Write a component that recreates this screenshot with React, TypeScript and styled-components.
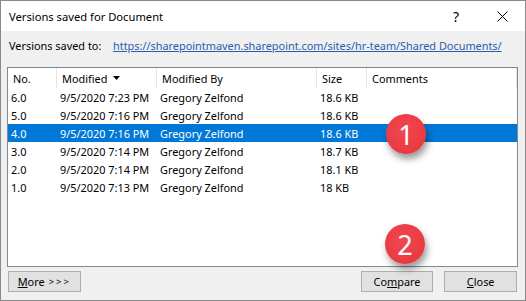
import React from "react";
import styled, { createGlobalStyle } from "styled-components";

const GlobalStyle = createGlobalStyle`
  body {
    margin: 0;
    background: #ffffff;
    font-family: "Segoe UI", "Noto Sans", "Liberation Sans", sans-serif;
    font-size: 10.9px;
    color: #000;
  }
`;

const Window = styled.div`
  position: relative;
  width: 526px;
  height: 301px;
  box-sizing: border-box;
  border: 1px solid #8a8a8a;
  background: #f0f0f0;
  display: flex;
  flex-direction: column;
`;

const TitleBar = styled.div`
  height: 30px;
  background: #ffffff;
  display: flex;
  align-items: center;
  padding-left: 8px;
`;

const Title = styled.div`
  flex: 1;
  font-size: 11.2px;
`;

const CaptionButton = styled.div`
  width: 46px;
  height: 30px;
  display: flex;
  align-items: center;
  justify-content: center;
  font-size: 14px;
`;

const Body = styled.div`
  flex: 1;
  display: flex;
  flex-direction: column;
  padding: 0 7px 0 6px;
`;

const PathRow = styled.div`
  height: 28px;
  display: flex;
  align-items: center;
  padding-left: 2px;
  margin-bottom: 8px;
  white-space: nowrap;
`;

const PathLabel = styled.span`
  width: 104px;
`;

const PathLink = styled.a`
  color: #2a5cae;
  text-decoration: underline;
`;

const ListBox = styled.div`
  height: 200px;
  box-sizing: border-box;
  border: 1px solid #828790;
  background: #ffffff;
`;

const columns = "49px 100px 160px 50px 1fr";

const HeaderRow = styled.div`
  display: grid;
  grid-template-columns: ${columns};
  height: 20px;
`;

const HeaderCell = styled.div`
  display: flex;
  align-items: center;
  padding-left: 5px;
  border-right: 1px solid #e5e5e5;
  gap: 6px;
`;

const Row = styled.div<{ $selected?: boolean }>`
  display: grid;
  grid-template-columns: ${columns};
  height: 18px;
  align-items: center;
  background: ${(p) => (p.$selected ? "#0078d7" : "transparent")};
  color: ${(p) => (p.$selected ? "#ffffff" : "#000000")};
`;

const Cell = styled.div`
  padding-left: 3px;
  white-space: nowrap;
`;

const Footer = styled.div`
  display: flex;
  align-items: center;
  margin-top: 4px;
  padding: 0 1px 0 1px;
`;

const Button = styled.div<{ $gap?: number }>`
  width: 73px;
  height: 21px;
  box-sizing: border-box;
  border: 1px solid #adadad;
  background: #e1e1e1;
  display: flex;
  align-items: center;
  justify-content: center;
  margin-left: ${(p) => p.$gap ?? 0}px;
`;

const Arrows = styled.span`
  font-size: 9.5px;
  letter-spacing: 2px;
  margin-left: 4px;
`;

const Badge = styled.div<{ $left: number; $top: number }>`
  position: absolute;
  left: ${(p) => p.$left}px;
  top: ${(p) => p.$top}px;
  width: 40px;
  height: 40px;
  border-radius: 50%;
  background: radial-gradient(circle at 45% 40%, #f2474f 0%, #e93a42 70%, #dd333b 100%);
  box-shadow: 2px 5px 7px rgba(0, 0, 0, 0.4);
  color: #ffffff;
  font-family: "Noto Sans", "Liberation Sans", sans-serif;
  font-size: 27px;
  display: flex;
  align-items: center;
  justify-content: center;
`;

const versions = [
  { no: "6.0", date: "9/5/2020 7:23 PM", size: "18.6 KB" },
  { no: "5.0", date: "9/5/2020 7:16 PM", size: "18.6 KB" },
  { no: "4.0", date: "9/5/2020 7:16 PM", size: "18.6 KB", selected: true },
  { no: "3.0", date: "9/5/2020 7:14 PM", size: "18.7 KB" },
  { no: "2.0", date: "9/5/2020 7:14 PM", size: "18.1 KB" },
  { no: "1.0", date: "9/5/2020 7:13 PM", size: "18 KB" },
];

const SortArrow = () => (
  <svg width="7" height="4" viewBox="0 0 7 4">
    <polygon points="0,0 7,0 3.5,4" fill="#000" />
  </svg>
);

const CloseIcon = () => (
  <svg width="11" height="11" viewBox="0 0 11 11">
    <path d="M0.5 0.5 L10.5 10.5 M10.5 0.5 L0.5 10.5" stroke="#000" strokeWidth="1" />
  </svg>
);

const App: React.FC = () => (
  <>
    <GlobalStyle />
    <Window>
      <TitleBar>
        <Title>Versions saved for Document</Title>
        <CaptionButton>?</CaptionButton>
        <CaptionButton>
          <CloseIcon />
        </CaptionButton>
      </TitleBar>
      <Body>
        <PathRow>
          <PathLabel>Versions saved to:</PathLabel>
          <PathLink>https://sharepointmaven.sharepoint.com/sites/hr-team/Shared Documents/</PathLink>
        </PathRow>
        <ListBox>
          <HeaderRow>
            <HeaderCell>No.</HeaderCell>
            <HeaderCell>
              Modified <SortArrow />
            </HeaderCell>
            <HeaderCell>Modified By</HeaderCell>
            <HeaderCell>Size</HeaderCell>
            <HeaderCell>Comments</HeaderCell>
          </HeaderRow>
          {versions.map((v) => (
            <Row key={v.no} $selected={v.selected}>
              <Cell>{v.no}</Cell>
              <Cell>{v.date}</Cell>
              <Cell>Gregory Zelfond</Cell>
              <Cell>{v.size}</Cell>
              <Cell />
            </Row>
          ))}
        </ListBox>
        <Footer>
          <Button>
            <u>M</u>ore<Arrows>&gt;&gt;&gt;</Arrows>
          </Button>
          <Button $gap={280}>
            Co<u>m</u>pare
          </Button>
          <Button $gap={11}>
            <u>C</u>lose
          </Button>
        </Footer>
      </Body>
      <Badge $left={385} $top={113}>1</Badge>
      <Badge $left={384} $top={223}>2</Badge>
    </Window>
  </>
);

export default App;
